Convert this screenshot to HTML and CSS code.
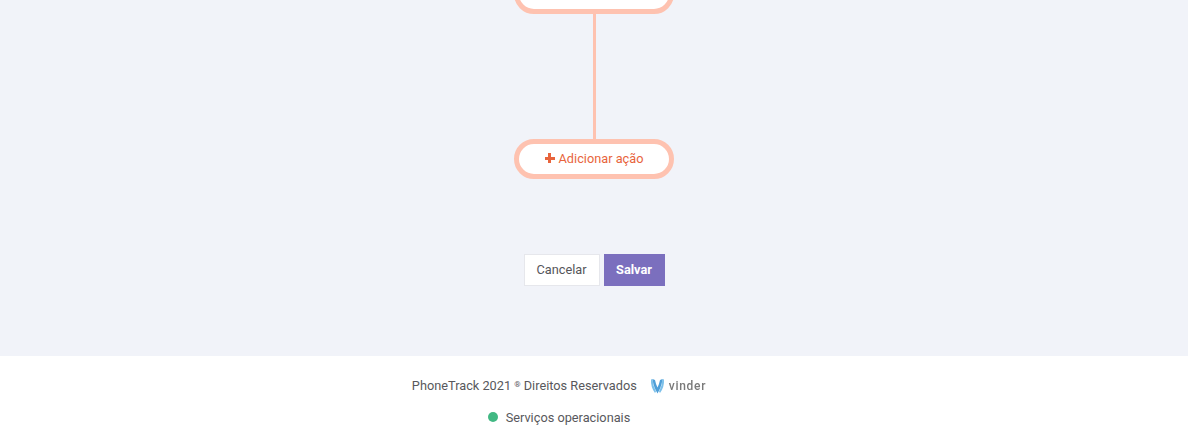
FILE: index.html
```html
<!DOCTYPE html>
<html lang="pt-BR">
<head>
<meta charset="utf-8">
<title>PhoneTrack</title>
<link rel="stylesheet" href="styles.css">
</head>
<body>
<main class="canvas">
  <div class="flow">
    <div class="node node-clipped"></div>
    <div class="connector"></div>
    <button class="node node-add" type="button"><span class="plus"></span>Adicionar ação</button>
  </div>
  <div class="actions">
    <button class="btn btn-cancel" type="button">Cancelar</button>
    <button class="btn btn-save" type="button">Salvar</button>
  </div>
</main>
<footer class="footer">
  <div class="footer-line">
    <span>PhoneTrack 2021 <sup class="reg">®</sup> Direitos Reservados</span>
    <span class="brand">
      <svg class="brand-mark" viewBox="0 0 15 16" width="15" height="16" aria-hidden="true">
        <path d="M1 1.5 Q0.5 9 5 15 L6 13.5 Q3 8 2.5 1Z" fill="#7cc0ea"/>
        <path d="M14 1.5 Q14.5 9 10 15 L9 13.5 Q12 8 12.5 1Z" fill="#7cc0ea"/>
        <path d="M2.5 1 L5 2 Q6 7 7.5 9.5 Q9 7 10 2 L12.5 1 Q11.5 9 7.5 15.5 Q3.5 9 2.5 1Z" fill="#4f9fd8"/>
      </svg>
      <span class="brand-name">vinder</span>
    </span>
  </div>
  <div class="status"><span class="dot"></span>Serviços operacionais</div>
</footer>
</body>
</html>
```
FILE: styles.css
```css
* { box-sizing: border-box; }
html, body { margin: 0; height: 427px; overflow: hidden; }
body {
  background: #fff;
  font-family: "Roboto", "Liberation Sans", sans-serif;
  color: #55555a;
}
.canvas {
  height: 356px;
  background: #f1f3f9;
  display: flex;
  flex-direction: column;
  align-items: center;
}
.flow {
  display: flex;
  flex-direction: column;
  align-items: center;
}
.node {
  width: 160px;
  height: 40px;
  border: 5px solid #fec2b0;
  border-radius: 20px;
  background: #fff;
}
.node-clipped { margin-top: -26px; }
.connector { width: 3px; height: 125px; background: #fec2b0; }
.node-add {
  display: flex;
  align-items: center;
  justify-content: center;
  gap: 4px;
  padding: 0 0 2px;
  font: 12.75px "Roboto", "Liberation Sans", sans-serif;
  color: #e8643c;
}
.plus {
  width: 10px;
  height: 10px;
  background:
    linear-gradient(#e8643c, #e8643c) center / 10px 3px no-repeat,
    linear-gradient(#e8643c, #e8643c) center / 3px 10px no-repeat;
}
.actions {
  display: flex;
  gap: 4px;
  margin-top: 75px;
}
.btn {
  height: 32px;
  padding: 0 0 2px;
  font: 12.75px "Roboto", "Liberation Sans", sans-serif;
  border-radius: 0;
}
.btn-cancel {
  width: 76px;
  background: #fff;
  border: 1px solid #e6e7ec;
  color: #55555a;
}
.btn-save {
  width: 61px;
  background: #7b6fbe;
  border: 0;
  color: #fff;
  font-weight: 700;
}
.footer {
  height: 71px;
  padding-right: 70px;
  display: flex;
  flex-direction: column;
  align-items: center;
  font-size: 12.75px;
  color: #58585c;
}
.footer-line {
  display: flex;
  align-items: center;
  gap: 13px;
  margin-top: 20px;
  height: 18px;
}
.reg { font-size: 8px; line-height: 0; vertical-align: 3px; }
.brand { display: flex; align-items: center; gap: 4px; margin-top: 2px; }
.brand-mark { display: block; }
.brand-name { font-weight: 500; font-size: 12px; color: #7a7a7a; letter-spacing: 0.7px; filter: blur(0.3px); }
.status {
  display: flex;
  align-items: center;
  gap: 8px;
  margin-top: 14px;
  height: 18px;
}
.dot { width: 10px; height: 10px; border-radius: 50%; background: #41b883; }
```
